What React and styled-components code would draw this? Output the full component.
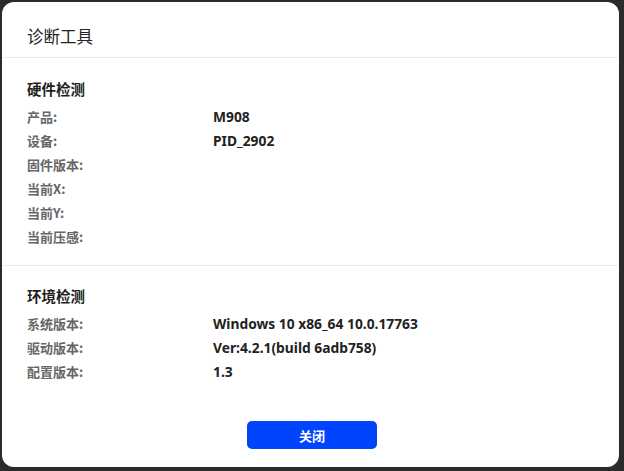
import React from "react"
import styled, { createGlobalStyle } from "styled-components"

const GlobalStyle = createGlobalStyle`
  html, body {
    margin: 0;
    padding: 0;
    background: #2b2b2b;
  }
  body {
    font-family: "Noto Sans", "Noto Sans CJK SC", sans-serif;
  }
`

const Backdrop = styled.div`
  width: 624px;
  height: 471px;
  padding: 2px 5px 4px 2px;
  box-sizing: border-box;
  background: #2b2b2b;
`

const Dialog = styled.div`
  height: 100%;
  background: #fff;
  border-radius: 12px;
  display: flex;
  flex-direction: column;
  overflow: hidden;
`

const Header = styled.div`
  box-sizing: border-box;
  height: 56px;
  padding: 12px 25px 0;
  display: flex;
  align-items: center;
  border-bottom: 1px solid #ececec;
  font-size: 16.5px;
  color: #222;
  font-family: "Noto Sans CJK SC", sans-serif;
`

const Section = styled.section`
  padding: ${({ last }) => (last ? "20px" : "21px")} 25px 17px;
  border-bottom: ${({ last }) => (last ? "none" : "1px solid #ececec")};
`

const SectionTitle = styled.h3`
  margin: 0 0 5px;
  font-size: 14.5px;
  font-weight: 700;
  color: #1f1f1f;
  font-family: "Noto Sans CJK SC", sans-serif;
  line-height: 20px;
`

const Row = styled.div`
  display: grid;
  grid-template-columns: 186px 1fr;
  height: 24px;
  align-items: center;
`

const Label = styled.span`
  font-size: 13px;
  font-weight: 700;
  color: #666;
  font-family: "Noto Sans CJK SC", sans-serif;
`

const Value = styled.span`
  font-size: 13.8px;
  font-weight: 700;
  color: #222;
  font-family: "Noto Sans", "Noto Sans CJK SC", sans-serif;
`

const Footer = styled.div`
  margin-top: auto;
  display: flex;
  justify-content: center;
  padding: 0 0 18px 3px;
`

const Button = styled.button`
  width: 130px;
  height: 28px;
  border: none;
  border-radius: 5px;
  background: #0044ff;
  color: #fff;
  font-size: 13px;
  font-weight: 700;
  font-family: "Noto Sans CJK SC", sans-serif;
  cursor: pointer;
`

const hardware = [
  ["产品:", "M908"],
  ["设备:", "PID_2902"],
  ["固件版本:", ""],
  ["当前X:", ""],
  ["当前Y:", ""],
  ["当前压感:", ""],
]

const env = [
  ["系统版本:", "Windows 10 x86_64 10.0.17763"],
  ["驱动版本:", "Ver:4.2.1(build 6adb758)"],
  ["配置版本:", "1.3"],
]

const InfoRows = ({ items }) =>
  items.map(([k, v]) => (
    <Row key={k}>
      <Label>{k}</Label>
      <Value>{v}</Value>
    </Row>
  ))

const App = () => {
  return (
    <>
      <GlobalStyle />
      <Backdrop>
        <Dialog>
          <Header>诊断工具</Header>
          <Section>
            <SectionTitle>硬件检测</SectionTitle>
            <InfoRows items={hardware} />
          </Section>
          <Section last>
            <SectionTitle>环境检测</SectionTitle>
            <InfoRows items={env} />
          </Section>
          <Footer>
            <Button>关闭</Button>
          </Footer>
        </Dialog>
      </Backdrop>
    </>
  )
}

export default App
